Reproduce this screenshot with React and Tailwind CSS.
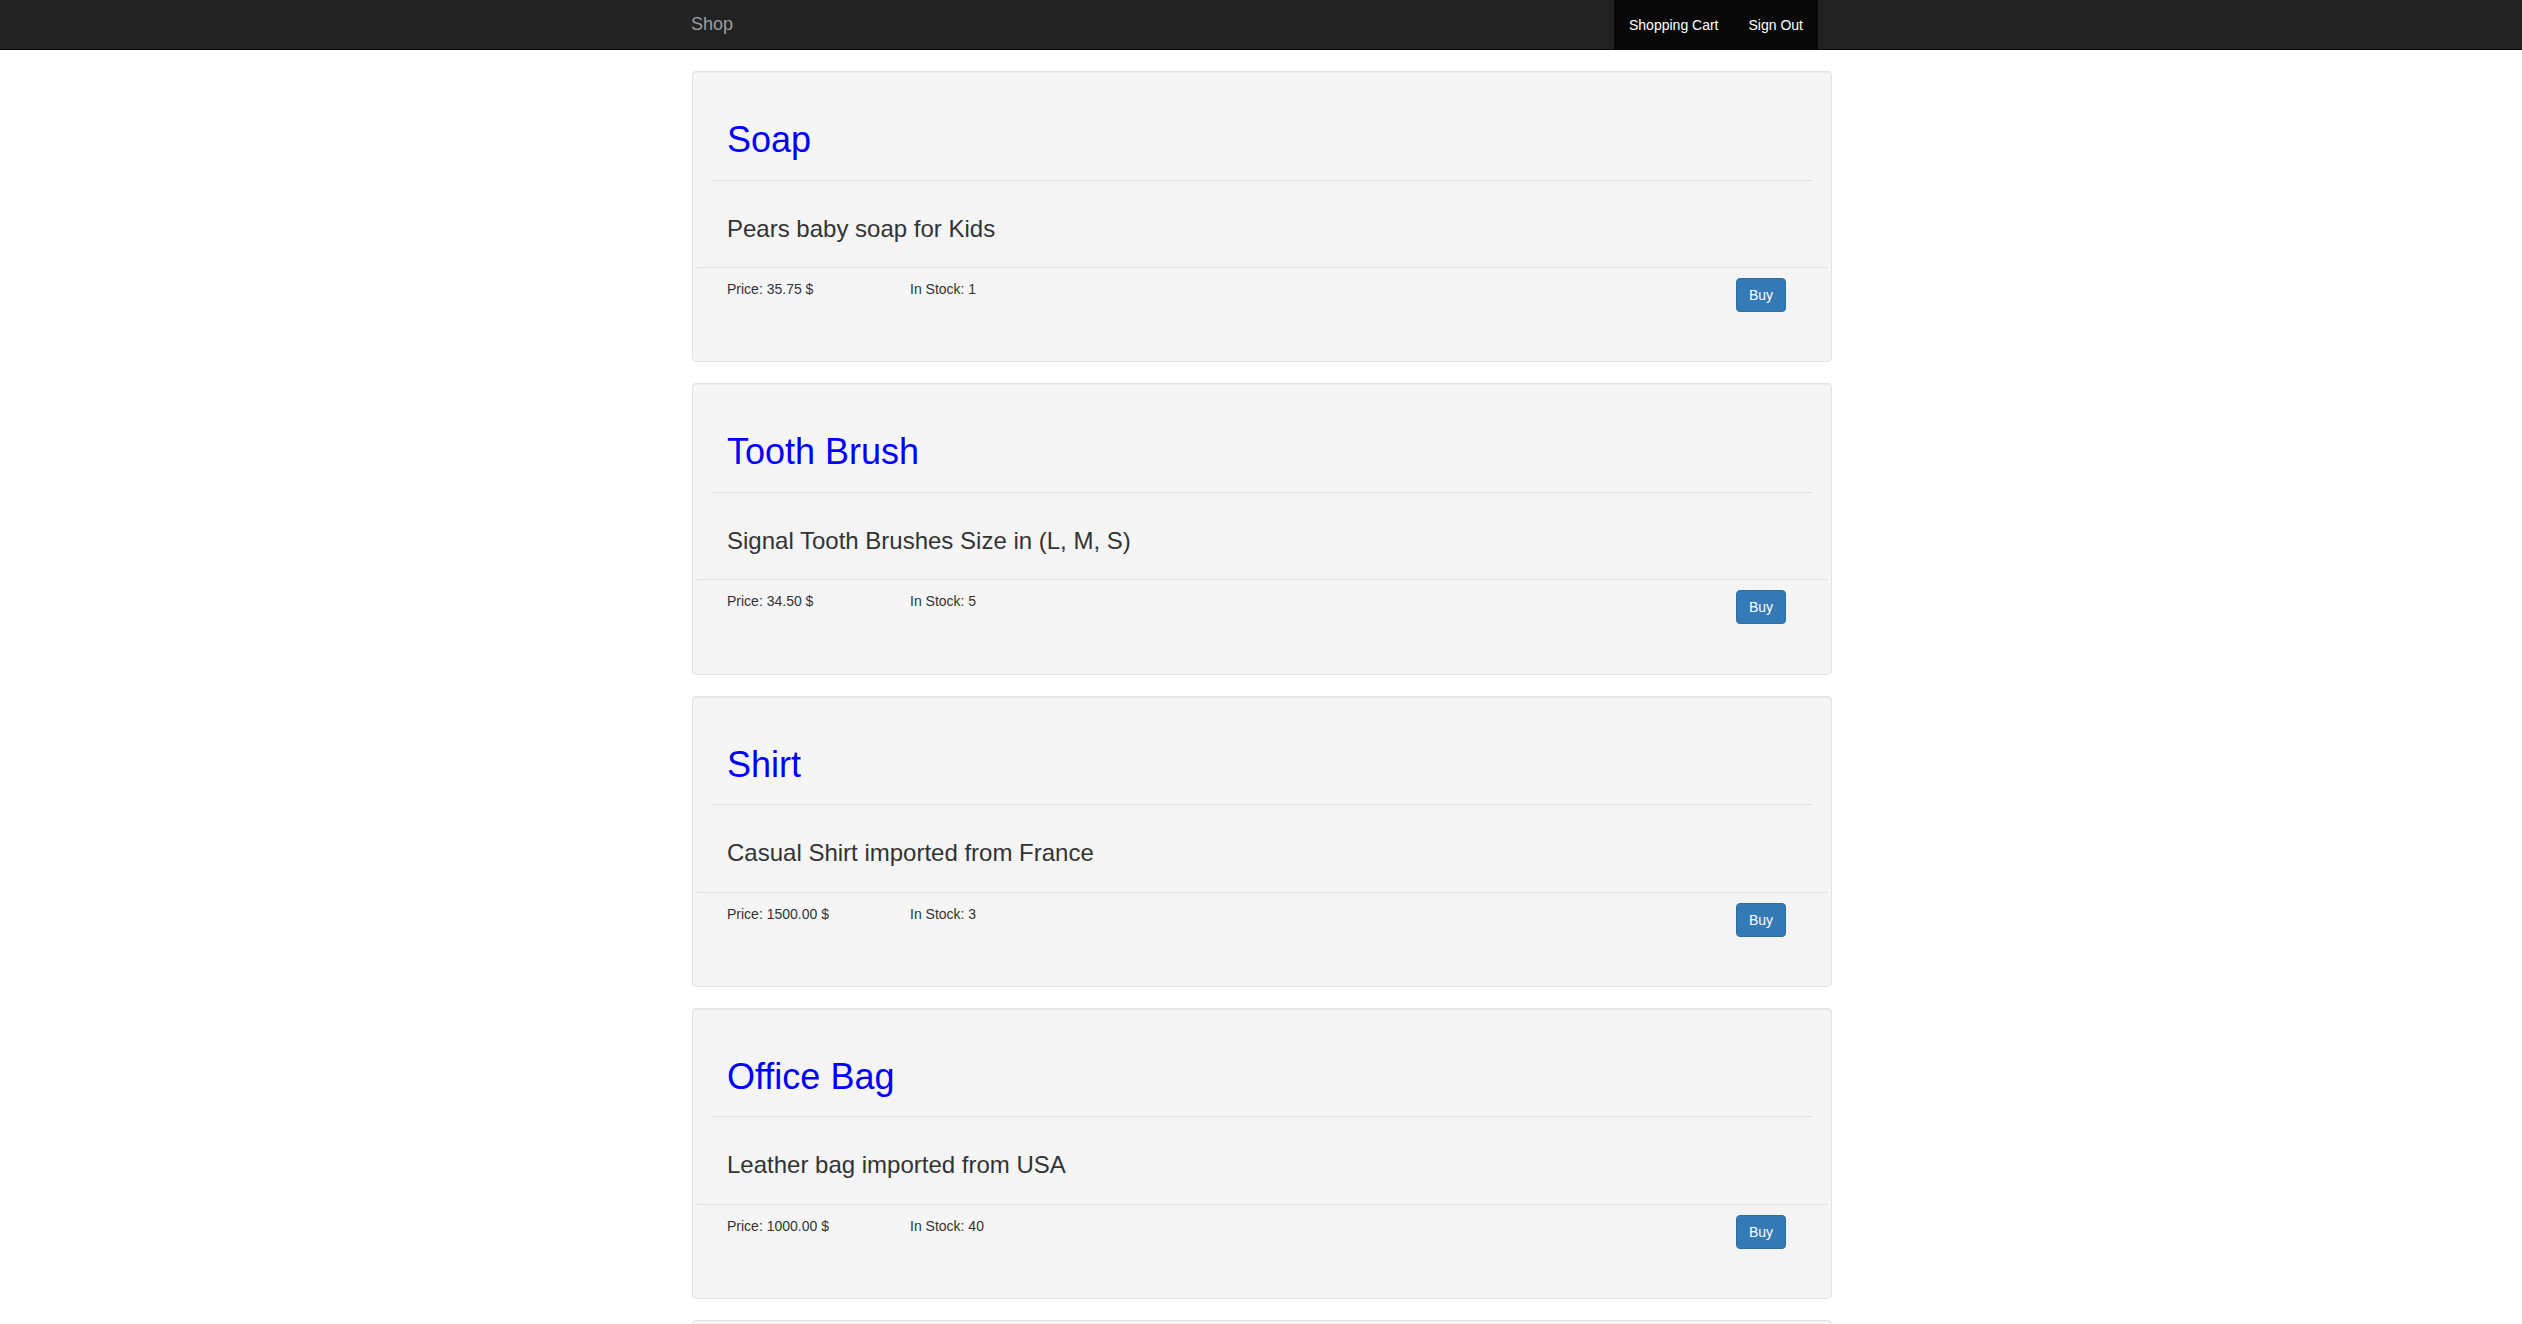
const PRODUCTS = [
  { name: 'Soap', desc: 'Pears baby soap for Kids', price: '35.75', stock: 1 },
  { name: 'Tooth Brush', desc: 'Signal Tooth Brushes Size in (L, M, S)', price: '34.50', stock: 5 },
  { name: 'Shirt', desc: 'Casual Shirt imported from France', price: '1500.00', stock: 3 },
  { name: 'Office Bag', desc: 'Leather bag imported from USA', price: '1000.00', stock: 40 },
];

function Navbar() {
  return (
    <nav className="h-[50px] bg-[#222] border-b border-[#080808]">
      <div className="mx-auto w-[1170px] px-[15px] h-full flex justify-between">
        <a href="#" className="pt-[14px] pb-[16px] text-[18px] leading-[20px] text-[#9d9d9d]">
          Shop
        </a>
        <ul className="flex bg-[#080808] mr-[13px]">
          <li>
            <a href="#" className="block px-[15px] py-[15px] text-[14px] leading-[20px] text-white">
              Shopping Cart
            </a>
          </li>
          <li>
            <a href="#" className="block px-[15px] py-[15px] text-[14px] leading-[20px] text-white">
              Sign Out
            </a>
          </li>
        </ul>
      </div>
    </nav>
  );
}

function ProductCard({ product }) {
  return (
    <div className="border border-[#e3e3e3] bg-[#f5f5f5] rounded-[4px] px-[4px] pt-[48px] pb-[49.3px] shadow-[inset_0_1px_1px_rgba(0,0,0,0.05)]">
      {/* Header */}
      <div className="mx-[15px] pb-[20px] border-b border-[#dddddd]">
        <h1 className="pl-[15px] text-[36px] leading-[1.1] text-[#0000ff]">{product.name}</h1>
      </div>

      {/* Description */}
      <div className="pl-[30px] pt-[35px] pb-[25px] border-b border-[#dddddd]">
        <h3 className="text-[24px] leading-[1.1] text-[#333]">{product.desc}</h3>
      </div>

      {/* Footer */}
      <div className="flex items-start pl-[30px] pr-[41px] pt-[10px] text-[14px] leading-[20px] text-[#333]">
        <span className="w-[183px] mt-px">Price: {product.price} $</span>
        <span className="mt-px">In Stock: {product.stock}</span>
        <button className="ml-auto h-[34px] px-[12px] rounded-[4px] border border-[#2e6da4] bg-[#337ab7] text-white text-[14px] leading-[20px]">
          Buy
        </button>
      </div>
    </div>
  );
}

export default function App() {
  return (
    <div className="h-screen overflow-hidden bg-white font-['Liberation_Sans',Arial,sans-serif]">
      <Navbar />
      <main className="mx-auto w-[1170px] pl-[16px] pr-[14px] pt-[21px] flex flex-col gap-[21px]">
        {PRODUCTS.map((p) => (
          <ProductCard key={p.name} product={p} />
        ))}
        {/* next card, only its top edge is on screen */}
        <div className="h-[291px] border border-[#e3e3e3] bg-[#f5f5f5] rounded-[4px]" />
      </main>
    </div>
  );
}
